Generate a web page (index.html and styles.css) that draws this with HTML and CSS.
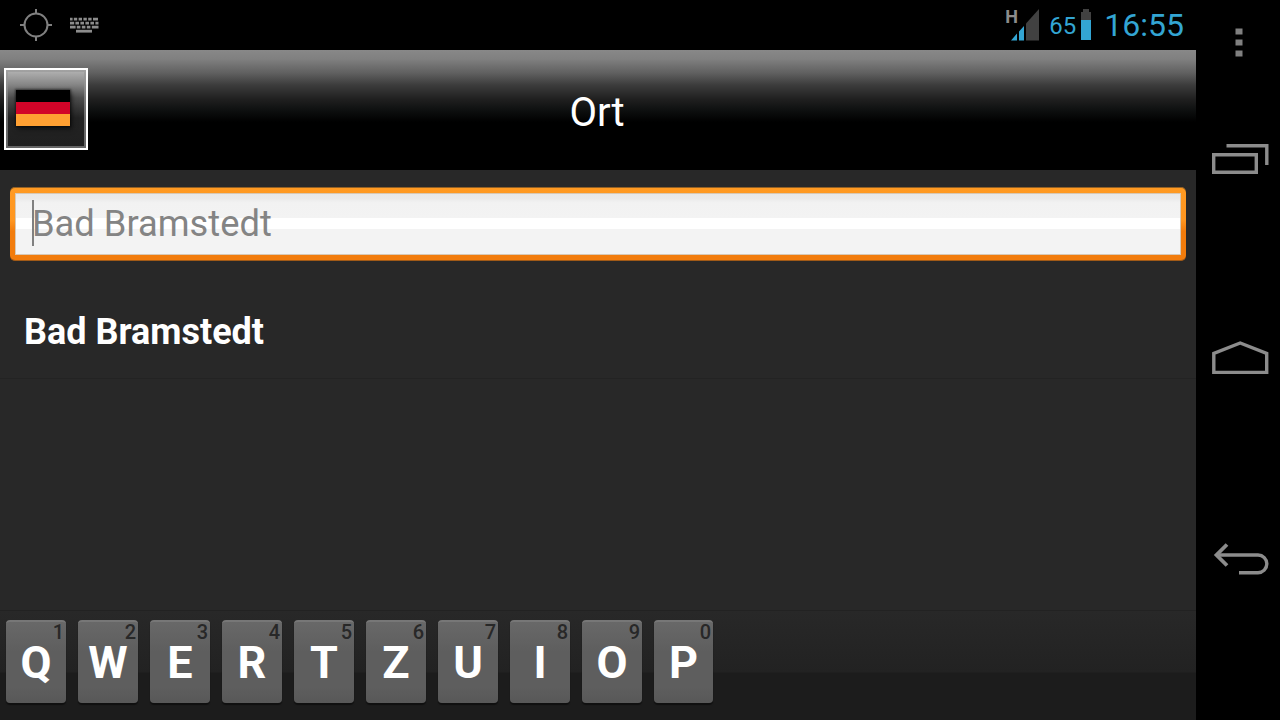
FILE: index.html
```
<!DOCTYPE html>
<html lang="de">
<head>
    <meta charset="UTF-8">
    <meta name="viewport" content="width=device-width, initial-scale=1.0">
    <title>Ort</title>
    <link rel="stylesheet" href="styles.css">
</head>
<body>
    <div class="screen">
        <div class="main">
            <!-- Status Bar -->
            <div class="status-bar">
                <svg class="gps-icon" width="34" height="34" viewBox="0 0 34 34" fill="none" stroke="#808080" stroke-width="2">
                    <circle cx="17" cy="17" r="11.5" />
                    <path d="M17 1v5M17 28v5M1 17h5M28 17h5" />
                </svg>
                <svg class="keyboard-icon" width="30" height="16" viewBox="0 0 30 16" fill="none" stroke="#8c8c8c" stroke-width="2.8">
                    <path d="M0 2.2h28.5" stroke-dasharray="2.6 1.2 3.4 1.4 3.4 1.4 3.4 1.4 3.4 1.4 5" />
                    <path d="M0 6.2h28.5" stroke-dasharray="4.2 1.2 3.6 1.4 3.6 1.4 3.6 1.4 3.6 1.4 5" />
                    <path d="M0 10.2h28.5" stroke-dasharray="5.6 1.2 3.6 1.4 3.6 1.4 3.6 1.4 7" />
                    <path d="M6 14.2h16" />
                </svg>
                <div class="status-right">
                    <span class="network">H</span>
                    <svg class="signal-icon" width="28" height="32" viewBox="0 0 28 32">
                        <path d="M0 31.5L6 24.5V31.5ZM8 22.5L13 17V31.5H8Z" fill="#33a5d3" />
                        <path d="M15 14.5L28 0V31.5H15Z" fill="#414141" />
                    </svg>
                    <span class="percent">65</span>
                    <svg class="battery-icon" width="10" height="31" viewBox="0 0 10 31">
                        <path d="M2 0H8V3H10V11H0V3H2Z" fill="#414141" />
                        <path d="M0 11H10V31H0Z" fill="#33a5d3" />
                    </svg>
                    <span class="clock">16:55</span>
                </div>
            </div>

            <!-- Title -->
            <div class="header">
                <div class="flag-btn">
                    <div class="flag">
                        <div class="stripe black"></div>
                        <div class="stripe red"></div>
                        <div class="stripe gold"></div>
                    </div>
                </div>
                <h1>Ort</h1>
            </div>

            <!-- Search Field -->
            <div class="search">
                <div class="search-inner">
                    <span class="cursor"></span>
                    <span class="hint">Bad Bramstedt</span>
                </div>
            </div>

            <!-- Results -->
            <ul class="results">
                <li>Bad Bramstedt</li>
            </ul>

            <!-- Keyboard -->
            <div class="keyboard">
                <div class="key"><span class="num">1</span>Q</div>
                <div class="key"><span class="num">2</span>W</div>
                <div class="key"><span class="num">3</span>E</div>
                <div class="key"><span class="num">4</span>R</div>
                <div class="key"><span class="num">5</span>T</div>
                <div class="key"><span class="num">6</span>Z</div>
                <div class="key"><span class="num">7</span>U</div>
                <div class="key"><span class="num">8</span>I</div>
                <div class="key"><span class="num">9</span>O</div>
                <div class="key last"><span class="num">0</span>P</div>
            </div>
        </div>

        <!-- System Navigation -->
        <div class="nav">
            <svg class="menu-icon" width="8" height="28" viewBox="0 0 8 28" fill="#808080">
                <path d="M0.5 0.5h7v6h-7zM0.5 11.5h7v6h-7zM0.5 22.5h7v6h-7z" />
            </svg>
            <svg class="recent-icon" width="60" height="34" viewBox="0 0 60 34" fill="none" stroke="#8c8c8c" stroke-width="3.4">
                <path d="M3.7 12.7H46.3V30.3H3.7Z" />
                <path d="M16.5 3.8H56.8V23" />
            </svg>
            <svg class="home-icon" width="60" height="36" viewBox="0 0 60 36" fill="none" stroke="#8c8c8c" stroke-width="3.4">
                <path d="M3.8 32.4V13.5L30.2 3L56.7 13.5V32.4Z" />
            </svg>
            <svg class="back-icon" width="60" height="34" viewBox="0 0 60 34" fill="none" stroke="#8c8c8c" stroke-width="3.4">
                <path d="M17 1.5L6.5 12L17 22.5" stroke-width="3.8" />
                <path d="M6.5 12H48A8.8 8.8 0 0 1 48 29.7H29" />
            </svg>
        </div>
    </div>
</body>
</html>
```

FILE: styles.css
```
body {
    margin: 0;
    background-color: #000;
    font-family: Roboto, sans-serif;
    color: #fff;
}
.screen {
    display: flex;
    width: 1280px;
    height: 720px;
    overflow: hidden;
}
.main {
    display: flex;
    flex-direction: column;
    width: 1196px;
    background-color: #282828;
}

/* Status bar */
.status-bar {
    display: flex;
    align-items: flex-start;
    box-sizing: border-box;
    height: 50px;
    padding: 8px 12px 0 19px;
    background-color: #000;
    color: #33a5d3;
}
.keyboard-icon {
    margin: 9px 0 0 17px;
}
.status-right {
    display: flex;
    align-items: flex-start;
    margin-left: auto;
}
.network {
    width: 6px;
    margin-top: -1px;
    font-size: 18px;
    line-height: 20px;
    font-weight: bold;
    color: #8c8c8c;
}
.signal-icon {
    margin-top: 1px;
}
.percent {
    margin: 4px 5px 0 10px;
    font-size: 24px;
    line-height: 28px;
}
.battery-icon {
    margin-top: 1px;
}
.clock {
    margin-left: 13px;
    font-size: 32px;
    line-height: 35px;
}

/* Title */
.header {
    display: flex;
    align-items: center;
    height: 120px;
    background: linear-gradient(#888 0, #808080 9px, #606060 23px, #3c3c3c 35px, #202020 49px, #0e1010 60px, #000 72px);
}
.flag-btn {
    box-sizing: border-box;
    width: 84px;
    height: 82px;
    margin: -2px 0 0 4px;
    padding: 20px 0 0 10px;
    border: 2px solid #fff;
    background: linear-gradient(#b4b4b4, #888 14px, #4c4c4c 28px, #222 48px, #202020);
    box-shadow: inset 0 0 0 2px rgba(150, 150, 150, 0.6);
}
.flag {
    width: 54px;
    box-shadow: 0 0 2px 1px rgba(0, 0, 0, 0.5), 2px 3px 5px rgba(0, 0, 0, 0.5);
}
.stripe {
    height: 12px;
}
.black {
    background-color: #000;
}
.red {
    background-color: #d20428;
}
.gold {
    background-color: #ffa032;
}
h1 {
    flex: 1;
    margin: 6px 88px 0 -2px;
    text-align: center;
    font-size: 40px;
    line-height: 48px;
    font-weight: normal;
}

/* Search field */
.search {
    height: 62px;
    margin: 17px 10px 0;
    padding: 6px 5px;
    border-radius: 5px;
    background: linear-gradient(#ff9a22 0, #ff9620 45%, #f27c0c 60%, #f27c0c);
    box-shadow: inset 0 1px 0 rgba(40, 40, 40, 0.5), inset 0 -1px 0 rgba(40, 40, 40, 0.4);
}
.search-inner {
    display: flex;
    align-items: center;
    height: 62px;
    padding-left: 17px;
    background: linear-gradient(#e8e8e8 0, #eaeaea 5px, #f2f2f2 10px, #f3f3f3 25px, #fff 25px, #fff 36px, #f3f3f3 36px);
    box-shadow: inset 0 0 0 1px #d8c8b4;
}
.cursor {
    width: 2px;
    height: 46px;
    margin: -2px -2px 0 0;
    background-color: #808080;
}
.hint {
    margin-top: -2px;
    font-size: 36.3px;
    color: #848484;
}

/* Results */
.results {
    margin: 24px 0 0;
    padding: 0;
    list-style: none;
}
.results li {
    height: 93px;
    padding-left: 24px;
    border-bottom: 1px solid #232323;
    font-size: 36px;
    line-height: 94px;
    font-weight: bold;
}

/* Keyboard */
.keyboard {
    display: flex;
    gap: 12px;
    box-sizing: border-box;
    height: 110px;
    margin-top: auto;
    padding: 9px 6px 0;
    border-top: 1px solid #222;
    background: linear-gradient(#282828 0, #222 61px, #1c1c1c 62px, #1c1c1c);
}
.key {
    position: relative;
    box-sizing: border-box;
    width: 60px;
    height: 83px;
    border-top: 2px solid #777;
    border-radius: 4px;
    background: linear-gradient(#686868, #5e5e5e 30px, #5e5e5e 65px, #585858);
    box-shadow: 0 2px 1px #101010;
    text-align: center;
    font-size: 45px;
    line-height: 82px;
    font-weight: bold;
}
.last {
    width: 59px;
}
.num {
    position: absolute;
    top: 0;
    right: 2px;
    font-size: 20px;
    line-height: 20px;
    font-weight: 500;
    color: #282828;
}

/* System navigation */
.nav {
    display: flex;
    flex-direction: column;
    align-items: center;
    width: 84px;
    background-color: #000;
}
.menu-icon {
    margin: 28px 0 0 1px;
    overflow: visible;
}
.recent-icon {
    margin: 86px 0 0 4px;
}
.home-icon {
    margin: 164px 0 0 4px;
}
.back-icon {
    margin: 167px 0 0 4px;
}
```
